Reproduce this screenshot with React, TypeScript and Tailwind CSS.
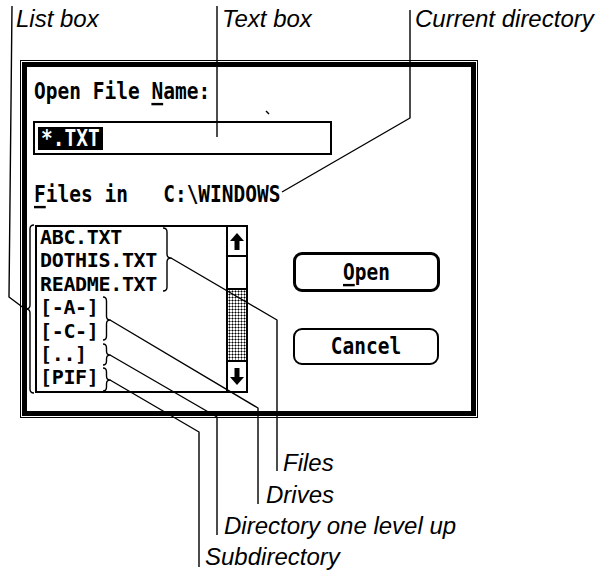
import React from 'react';

// curly brace from y0 to y1, tip at (x + w, ym); negative w points left
function brace(x: number, y0: number, ym: number, y1: number, w: number) {
  const m = x + w / 2;
  const t = x + w;
  const r = Math.min(4, (ym - y0) / 2, (y1 - ym) / 2);
  return `M${x} ${y0} Q${m} ${y0} ${m} ${y0 + r} L${m} ${ym - r} Q${m} ${ym} ${t} ${ym} Q${m} ${ym} ${m} ${ym + r} L${m} ${y1 - r} Q${m} ${y1} ${x} ${y1}`;
}

const files = ['ABC.TXT', 'DOTHIS.TXT', 'README.TXT', '[-A-]', '[-C-]', '[..]', '[PIF]'];

const labels = [
  { text: 'List box', cls: 'left-[16px] top-[7px]' },
  { text: 'Text box', cls: 'left-[222px] top-[7px]' },
  { text: 'Current directory', cls: 'left-[415px] top-[7px]' },
  { text: 'Files', cls: 'left-[283px] top-[451px]' },
  { text: 'Drives', cls: 'left-[266px] top-[483px]' },
  { text: 'Directory one level up', cls: 'left-[224px] top-[514px]' },
  { text: 'Subdirectory', cls: 'left-[205px] top-[545px]' },
];

function Arrow({ down }: { down?: boolean }) {
  return (
    <svg width="14" height="17" viewBox="0 0 14 17" className={down ? 'rotate-180' : ''}>
      <polygon points="7,0 14,8 9.5,8 9.5,17 4.5,17 4.5,8 0,8" fill="#000" />
    </svg>
  );
}

export default function App() {
  return (
    <div className="relative w-[600px] h-[572px] bg-white overflow-hidden pt-[60px] pl-[20px] text-black">
      {/* Dialog */}
      <div className="w-[458px] h-[358px] border border-black p-px bg-white font-['DejaVu_Sans_Mono','Liberation_Mono',monospace] font-bold text-[19.5px]">
        <div className="h-full border-[5px] border-black pl-[6px] pt-[15px]">
          <div className="h-[20px] leading-[20px] pl-[1px]">
            <span className="inline-block leading-[17px] scale-y-[1.2] whitespace-pre">
              Open File <span className="underline decoration-2 underline-offset-[3px]">N</span>ame:
            </span>
          </div>

          <div className="mt-[19px] w-[299px] h-[34px] border-2 border-black flex items-center pl-[3px]">
            <span className="h-[23px] leading-[23px] bg-black text-white px-[3px]">
              <span className="inline-block leading-[17px] scale-y-[1.2]">*.TXT</span>
            </span>
          </div>

          <div className="mt-[30px] h-[20px] leading-[20px] pl-[1px]">
            <span className="inline-block leading-[17px] scale-y-[1.2] whitespace-pre">
              <span className="underline decoration-2 underline-offset-[3px]">F</span>
              {'iles in   C:\\WINDOWS'}
            </span>
          </div>

          <div className="mt-[20px] flex">
            {/* List box */}
            <div className="ml-[2px] w-[213px] h-[168px] border-2 border-black flex">
              <div className="flex-1 pl-[3px] -mt-[1px] text-[20px] tracking-[-0.34px]">
                {files.map((f) => (
                  <div key={f} className="h-[23.4px] leading-[23.4px] whitespace-pre">
                    {f}
                  </div>
                ))}
              </div>
              <div className="w-[20px] border-l-2 border-black flex flex-col">
                <div className="h-[30px] border-b-2 border-black flex items-center justify-center">
                  <Arrow />
                </div>
                <div className="h-[33px] border-b-2 border-black bg-white" />
                <div className="flex-1 bg-[image:radial-gradient(#000_0.9px,transparent_1.1px)] bg-[length:3px_3px]" />
                <div className="h-[31px] border-t-2 border-black flex items-center justify-center">
                  <Arrow down />
                </div>
              </div>
            </div>

            {/* Buttons */}
            <div className="ml-[45px] flex flex-col">
              <div className="mt-[27px] w-[147px] h-[40px] border-[3px] border-black rounded-[9px] flex items-center justify-center">
                <span className="inline-block leading-[17px] scale-y-[1.2]">
                  <span className="underline decoration-2 underline-offset-[3px]">O</span>pen
                </span>
              </div>
              <div className="mt-[36px] w-[146px] h-[37px] border-2 border-black rounded-[9px] flex items-center justify-center">
                <span className="inline-block leading-[17px] scale-y-[1.2]">Cancel</span>
              </div>
            </div>
          </div>
        </div>
      </div>

      {/* Annotation labels */}
      {labels.map((l) => (
        <span
          key={l.text}
          className={`absolute ${l.cls} font-['Liberation_Sans',Arial,sans-serif] italic text-[24px] leading-[24px] whitespace-pre`}
        >
          {l.text}
        </span>
      ))}

      {/* Leader lines */}
      <svg
        className="absolute inset-0 pointer-events-none"
        width="600"
        height="572"
        viewBox="0 0 600 572"
        fill="none"
        stroke="#000"
        strokeWidth="1.4"
        strokeLinejoin="round"
      >
        <path d="M12 6 L9 297 L25 309" />
        <path d={brace(34, 225, 309, 393, -8)} />
        <path d="M217 6 L217 137" />
        <path d="M410 10 L410 118 L282 192" />
        <path d="M266 111 L269 114" />
        <path d={brace(163, 228, 258, 291, 8)} />
        <path d="M171 258 L277 320 L277 471" />
        <path d={brace(103, 297, 320, 340, 7)} />
        <path d="M110 320 L258 408 L258 504" />
        <path d={brace(103, 344, 355, 365, 7)} />
        <path d="M110 355 L217 417 L217 535" />
        <path d={brace(103, 368, 380, 391, 7)} />
        <path d="M110 380 L199 432 L199 567" />
      </svg>
    </div>
  );
}
